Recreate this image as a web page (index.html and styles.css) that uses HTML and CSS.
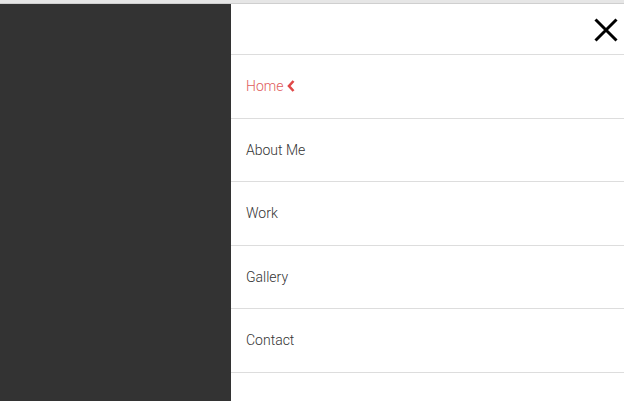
FILE: index.html
```html
<!DOCTYPE html>
<html lang="en">
<head>
    <meta charset="UTF-8">
    <title>Menu</title>
    <link rel="stylesheet" href="styles.css">
</head>
<body>
    <div class="topline"></div>
    <div class="layout">
        <div class="overlay"></div>
        <nav class="sidenav">
            <div class="sidenav-header">
                <button class="close-btn" aria-label="Close">
                    <svg width="24" height="24" viewBox="0 0 24 24">
                        <path d="M1.5 1.5 L22.5 22.5 M22.5 1.5 L1.5 22.5" stroke="#000" stroke-width="3" fill="none"/>
                    </svg>
                </button>
            </div>
            <ul class="menu">
                <li class="menu-item active">Home
                    <svg class="chevron" width="8" height="12" viewBox="0 0 8 12">
                        <path d="M6.5 1 L2 6 L6.5 11" stroke="currentColor" stroke-width="2.6" fill="none"/>
                    </svg>
                </li>
                <li class="menu-item">About Me</li>
                <li class="menu-item">Work</li>
                <li class="menu-item">Gallery</li>
                <li class="menu-item">Contact</li>
            </ul>
        </nav>
    </div>
</body>
</html>
```

FILE: styles.css
```css
body {
    margin: 0;
    font-family: Roboto, "Noto Sans", sans-serif;
    font-weight: 300;
    background-color: #fff;
    height: 401px;
    overflow: hidden;
}
.topline {
    height: 3px;
    background-color: #e6e6e6;
    border-bottom: 1px solid #cfcfcf;
}
.layout {
    display: flex;
    height: 397px;
}
.overlay {
    width: 231px;
    background-color: #333;
}
.sidenav {
    flex: 1;
    background-color: #fff;
}
.sidenav-header {
    height: 50px;
    border-bottom: 1px solid #ddd;
    display: flex;
    justify-content: flex-end;
    align-items: center;
}
.close-btn {
    background: none;
    border: none;
    padding: 0;
    margin-right: 6px;
    margin-top: 1px;
    display: flex;
}
.menu {
    list-style: none;
    margin: 0;
    padding: 0;
}
.menu-item {
    padding: 20px 15px;
    font-size: 14px;
    line-height: 22.5px;
    color: #333;
    border-bottom: 1px solid #ddd;
    display: flex;
    align-items: center;
}
.menu-item.active {
    color: #e05c5c;
}
.chevron {
    margin-left: 4px;
    color: #e04848;
}
```
